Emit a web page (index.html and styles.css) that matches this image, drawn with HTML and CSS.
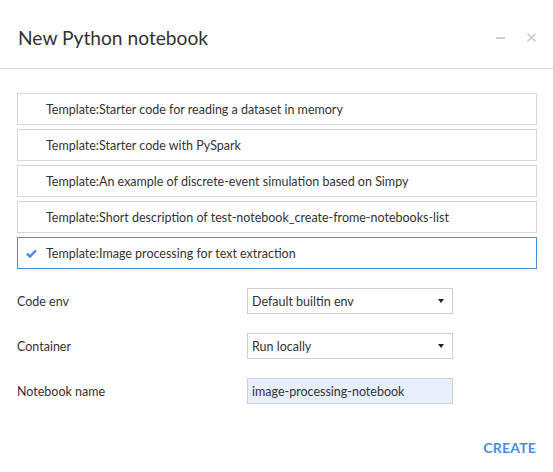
FILE: index.html
```html
<!DOCTYPE html>
<html>
<head>
<meta charset="utf-8">
<link rel="stylesheet" href="styles.css">
</head>
<body>
<div class="modal">
  <div class="header">
    <h1 class="title">New Python notebook</h1>
    <div class="header-actions">
      <span class="minimize"></span>
      <svg class="close" width="9" height="9" viewBox="0 0 9 9"><path d="M1 1L8 8M8 1L1 8" stroke="#c8c8c8" stroke-width="1.6" stroke-linecap="round"/></svg>
    </div>
  </div>
  <div class="body">
    <ul class="templates">
      <li class="template"><span class="check"></span>Template:Starter code for reading a dataset in memory</li>
      <li class="template"><span class="check"></span>Template:Starter code with PySpark</li>
      <li class="template"><span class="check"></span>Template:An example of discrete-event simulation based on Simpy</li>
      <li class="template"><span class="check"></span>Template:Short description of test-notebook_create-frome-notebooks-list</li>
      <li class="template selected"><span class="check"><svg width="11" height="9" viewBox="0 0 11 9"><path d="M1 4.6L4 7.6L10 1.4" fill="none" stroke="#4a8de6" stroke-width="2.4"/></svg></span>Template:Image processing for text extraction</li>
    </ul>
    <div class="form">
      <div class="form-row">
        <label class="label">Code env</label>
        <div class="select"><span>Default builtin env</span><span class="caret"></span></div>
      </div>
      <div class="form-row">
        <label class="label">Container</label>
        <div class="select"><span>Run locally</span><span class="caret"></span></div>
      </div>
      <div class="form-row">
        <label class="label">Notebook name</label>
        <div class="input">image-processing-notebook</div>
      </div>
    </div>
  </div>
  <div class="footer">
    <button class="create">CREATE</button>
  </div>
</div>
</body>
</html>
```

FILE: styles.css
```css
* { box-sizing: border-box; }
html, body { margin: 0; padding: 0; background: #fff; }
body {
  font-family: Lato, "Open Sans", sans-serif;
  color: #333;
  width: 553px;
  height: 472px;
  overflow: hidden;
}
.modal { width: 553px; }
.header {
  height: 69px;
  border-bottom: 1px solid #d9d9d9;
  display: flex;
  align-items: center;
  justify-content: space-between;
  padding: 7px 17px 0 18px;
}
.title {
  margin: 0;
  font-size: 19.2px;
  font-weight: 400;
  color: #333;
}
.header-actions {
  display: flex;
  align-items: center;
  gap: 22px;
}
.minimize {
  display: block;
  width: 9px;
  height: 2px;
  background: #cfcfcf;
}
.close { display: block; }
.body { padding: 24px 16px 0 17px; }
.templates {
  list-style: none;
  margin: 0;
  padding: 0;
  display: flex;
  flex-direction: column;
  gap: 4px;
}
.template {
  height: 32px;
  border: 1px solid #d6d6d6;
  display: flex;
  align-items: center;
  font-size: 12.5px;
  color: #333;
  padding-left: 8px;
}
.template.selected { border-color: #4a8de6; }
.check {
  width: 20px;
  display: flex;
  align-items: center;
}
.form {
  margin-top: 19px;
  display: flex;
  flex-direction: column;
  gap: 19px;
}
.form-row {
  display: flex;
  align-items: center;
  height: 26px;
}
.label {
  width: 230px;
  font-size: 12.5px;
}
.select, .input {
  width: 206px;
  height: 26px;
  border: 1px solid #cfcfcf;
  font-size: 12.5px;
  display: flex;
  align-items: center;
  padding: 0 8px 0 4px;
  color: #333;
}
.select { justify-content: space-between; }
.caret {
  width: 0;
  height: 0;
  border-left: 3.5px solid transparent;
  border-right: 3.5px solid transparent;
  border-top: 4px solid #222;
}
.input { background: #e7effd; }
.footer {
  display: flex;
  justify-content: flex-end;
  padding: 35px 17px 0 0;
}
.create {
  border: 0;
  background: none;
  padding: 0;
  font-family: inherit;
  font-size: 14px;
  font-weight: 700;
  color: #4a8de6;
  letter-spacing: 0.2px;
}
```
